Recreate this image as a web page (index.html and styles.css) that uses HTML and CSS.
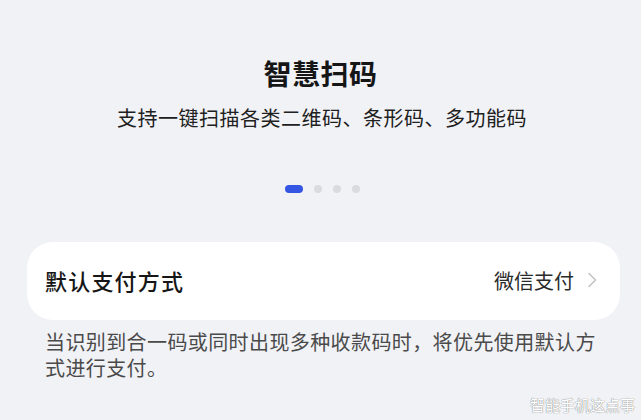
FILE: index.html
```html
<!DOCTYPE html>
<html lang="zh-CN">
<head>
<meta charset="utf-8">
<link rel="stylesheet" href="styles.css">
</head>
<body>
<div class="page">
  <h1 class="title">智慧扫码</h1>
  <p class="subtitle">支持一键扫描各类二维码、条形码、多功能码</p>
  <div class="dots">
    <span class="dot active"></span>
    <span class="dot"></span>
    <span class="dot"></span>
    <span class="dot"></span>
  </div>
  <div class="card">
    <span class="card-label">默认支付方式</span>
    <span class="card-value">微信支付
      <svg class="chevron" width="10" height="16" viewBox="0 0 10 16"><path d="M2 1.5 L8.5 8 L2 14.5" fill="none" stroke="#c4c4c8" stroke-width="1.6" stroke-linecap="round" stroke-linejoin="round"/></svg>
    </span>
  </div>
  <p class="desc">当识别到合一码或同时出现多种收款码时，将优先使用默认方式进行支付。</p>
  <div class="watermark">智能手机这点事</div>
</div>
</body>
</html>
```
FILE: styles.css
```css
html, body {
  margin: 0;
  padding: 0;
}
body {
  background: #f1f2f6;
  font-family: "Noto Sans CJK SC", "Noto Sans", sans-serif;
  width: 641px;
  height: 420px;
  overflow: hidden;
}
.page {
  position: relative;
  height: 420px;
  padding-top: 55px;
  box-sizing: border-box;
  display: flex;
  flex-direction: column;
  align-items: center;
}
.title {
  margin: 0;
  font-size: 28px;
  line-height: 36px;
  font-weight: 600;
  color: #161616;
  letter-spacing: 0.5px;
}
.subtitle {
  margin: 13px 0 0;
  font-size: 20px;
  line-height: 28px;
  color: #202020;
  letter-spacing: 0.5px;
  padding-left: 3px;
}
.dots {
  margin-top: 53px;
  margin-left: 4px;
  display: flex;
  gap: 11px;
  height: 8px;
}
.dot {
  width: 8px;
  height: 8px;
  border-radius: 4px;
  background: #dadbdf;
}
.dot.active {
  width: 18px;
  background: #3556e3;
}
.card {
  margin-top: 49px;
  align-self: stretch;
  margin-left: 27px;
  margin-right: 21px;
  height: 78px;
  background: #ffffff;
  border-radius: 26px;
  display: flex;
  align-items: center;
  justify-content: space-between;
  padding: 0 23px 0 18px;
}
.card-label {
  font-size: 22px;
  font-weight: 500;
  color: #161616;
  letter-spacing: 1.2px;
  margin-bottom: 3px;
}
.card-value {
  display: flex;
  align-items: center;
  gap: 13px;
  font-size: 20px;
  color: #2a2a2a;
  margin-bottom: 2px;
}
.chevron {
  display: block;
}
.desc {
  align-self: stretch;
  margin: 9px 36px 0 45px;
  font-size: 20px;
  line-height: 26px;
  letter-spacing: 0.4px;
  color: #4a4a4a;
}
.watermark {
  position: absolute;
  right: 6px;
  bottom: 6px;
  font-size: 15px;
  line-height: 18px;
  color: #ffffff;
  text-shadow: 0 0 1px #8a8a8a, 0 0 1px #8a8a8a;
}
```
